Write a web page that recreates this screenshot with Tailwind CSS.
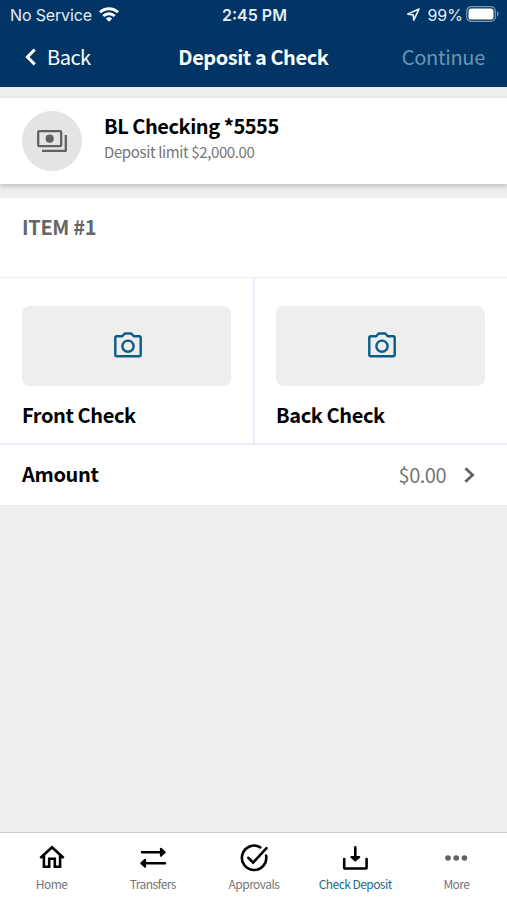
<!DOCTYPE html>
<html lang="en">
<head>
    <meta charset="UTF-8">
    <meta name="viewport" content="width=device-width, initial-scale=1.0">
    <title>Deposit a Check</title>
    <script src="https://cdn.jsdelivr.net/npm/@tailwindcss/browser@4"></script>
</head>
<body class="bg-[#eeeeee] font-['Noto_Sans_CJK_SC',sans-serif] text-black">
    <div class="flex h-[900px] w-[507px] flex-col overflow-hidden">

        <!-- Header -->
        <header class="h-[87px] shrink-0 bg-[#003566] text-white">
            <div class="grid h-[30px] grid-cols-3 items-center pr-[8px] pl-[10px] font-['Inter',sans-serif] text-[16px] leading-[30px] text-[#e4ecf4]">
                <div class="flex items-center gap-[7px]">
                    <span class="tracking-[-0.15px] whitespace-nowrap">No Service</span>
                    <svg class="-mt-0.5 h-[15px] w-5 shrink-0" viewBox="0 0 20 15" fill="none" stroke="#fff" stroke-width="2.9">
                        <path d="M1 5.3a13 13 0 0 1 18 0"/>
                        <path d="M4.3 9a8.3 8.3 0 0 1 11.4 0"/>
                        <path d="M10 14.8 6.8 11.6a4.6 4.6 0 0 1 6.4 0z" fill="#fff" stroke="none"/>
                    </svg>
                </div>
                <div class="text-center font-semibold">2:45 PM</div>
                <div class="flex items-center justify-end">
                    <svg class="mr-[7px] -mt-px h-[13px] w-[13px]" viewBox="0 0 13 13" fill="none" stroke="currentColor" stroke-width="1.7" stroke-linejoin="round">
                        <path d="M12 1 .9 6.1l5.3.7.6 5.3z"/>
                    </svg>
                    <span>99%</span>
                    <svg class="-mt-0.5 ml-[3px] h-4 w-[33px]" viewBox="0 0 33 16">
                        <rect x=".7" y=".7" width="28.6" height="14.6" rx="4.3" fill="none" stroke="#7d9bb7" stroke-width="1.2"/>
                        <rect x="2.5" y="2.5" width="25" height="11" rx="2.6" fill="#fff"/>
                        <path d="M31 5.3c2 .8 2 4.6 0 5.4z" fill="#7d9bb7"/>
                    </svg>
                </div>
            </div>
            <div class="grid h-[53px] grid-cols-3 items-center pr-[22px] pl-[25px] text-[20px] leading-[30px]">
                <button class="flex items-center gap-[11px]">
                    <svg class="mt-px h-[18px] w-[11px]" viewBox="0 0 11 18" fill="none" stroke="currentColor" stroke-width="3">
                        <path d="M9.7 1.6 2.4 9l7.3 7.4"/>
                    </svg>
                    <span class="tracking-[-0.5px]">Back</span>
                </button>
                <h1 class="pr-[4px] text-center font-bold tracking-[-0.44px] whitespace-nowrap">Deposit a Check</h1>
                <button class="text-right tracking-[-0.3px] text-[#6f93b4]">Continue</button>
            </div>
        </header>

        <!-- Account -->
        <section class="mt-[11px] flex h-[86px] shrink-0 items-center bg-white pl-[22px] shadow-[0_2px_5px_rgba(0,0,0,0.22)]">
            <div class="flex size-[60px] items-center justify-center rounded-full bg-[#e4e4e4]">
                <svg class="h-[22px] w-[30px]" viewBox="0 0 30 22" fill="none" stroke="#616161" stroke-width="2.3" stroke-linejoin="round">
                    <rect x="1.2" y="1.2" width="23" height="15" rx="1.2"/>
                    <circle cx="12.7" cy="8.7" r="4.1" fill="#616161" stroke="none"/>
                    <path d="M28.8 5v15.8H5"/>
                </svg>
            </div>
            <div class="-mt-[6px] ml-[22px]">
                <div class="text-[20px] leading-[27px] font-bold tracking-[-0.46px]">BL Checking *5555</div>
                <div class="text-[15px] leading-[25px] tracking-[-0.38px] text-[#757575]">Deposit limit $2,000.00</div>
            </div>
        </section>

        <!-- Check item -->
        <section class="mt-[14px] shrink-0 bg-white">
            <h2 class="h-[80px] border-b border-[#ededf5] pt-[14px] pl-[22px] text-[20px] leading-[30px] font-bold tracking-[-0.35px] text-[#666666]">ITEM #1</h2>
            <div class="grid h-[167px] grid-cols-[255px_252px] border-b-2 border-[#ebebfa]">
                <div class="border-r-2 border-[#ebebfa] px-[22px] pt-[28px]">
                    <button class="flex h-20 w-full items-center justify-center rounded-lg bg-[#eeeeee] pb-[3px] pl-[2px]">
                        <svg class="h-[26px] w-7" viewBox="0 0 28 26" fill="none" stroke="#0b5c85" stroke-width="2.4" stroke-linejoin="round">
                            <path d="M2.5 4.3h5.7L10.7 1.5h6.6l2.5 2.8h5.7a1.2 1.2 0 0 1 1.2 1.2v17.6a1.2 1.2 0 0 1-1.2 1.2h-23a1.2 1.2 0 0 1-1.2-1.2V5.5a1.2 1.2 0 0 1 1.2-1.2z"/>
                            <circle cx="14" cy="14.2" r="5.6"/>
                        </svg>
                    </button>
                    <div class="mt-[14px] text-[20px] leading-[30px] font-bold tracking-[-0.4px]">Front Check</div>
                </div>
                <div class="pt-[28px] pr-[22px] pl-[21px]">
                    <button class="flex h-20 w-full items-center justify-center rounded-lg bg-[#eeeeee] pb-[3px] pl-[2px]">
                        <svg class="h-[26px] w-7" viewBox="0 0 28 26" fill="none" stroke="#0b5c85" stroke-width="2.4" stroke-linejoin="round">
                            <path d="M2.5 4.3h5.7L10.7 1.5h6.6l2.5 2.8h5.7a1.2 1.2 0 0 1 1.2 1.2v17.6a1.2 1.2 0 0 1-1.2 1.2h-23a1.2 1.2 0 0 1-1.2-1.2V5.5a1.2 1.2 0 0 1 1.2-1.2z"/>
                            <circle cx="14" cy="14.2" r="5.6"/>
                        </svg>
                    </button>
                    <div class="mt-[14px] text-[20px] leading-[30px] font-bold tracking-[-0.4px]">Back Check</div>
                </div>
            </div>
            <div class="flex h-[60px] items-center pr-[32px] pl-[22px] text-[20px] leading-[30px]">
                <span class="-mt-[2px] grow font-bold tracking-[-0.35px]">Amount</span>
                <span class="-mt-px tracking-[-0.5px] text-[#757575]">$0.00</span>
                <svg class="ml-[18px] h-4 w-[11px]" viewBox="0 0 11 16" fill="none" stroke="#616161" stroke-width="2.8">
                    <path d="M1.4 1.2 8.6 8l-7.2 6.8"/>
                </svg>
            </div>
        </section>

        <!-- Tab bar -->
        <nav class="mt-auto grid h-[68px] shrink-0 grid-cols-5 border-t border-[#cfcfcf] bg-white pt-[10px] pl-px text-center text-[12px] leading-[18px] tracking-[-0.55px] text-[#757575]">
            <a class="flex flex-col items-center gap-[2px]">
                <svg class="h-[30px] w-7" viewBox="0 0 28 30" fill="none" stroke="#000" stroke-width="2.6">
                    <path d="M2.3 15 14 4.3 25.7 15M5.9 12.2v11.6h5.3v-8h5.6v8h5.3V12.2"/>
                </svg>
                Home
            </a>
            <a class="flex flex-col items-center gap-[2px]">
                <svg class="h-[30px] w-7" viewBox="0 0 28 30" fill="none" stroke="#000" stroke-width="2.5" stroke-linecap="round" stroke-linejoin="round">
                    <path d="M3 9.3h21M5 20.2h21"/>
                    <path d="M21.9 5.8 25.7 9.3l-3.8 3.5zM6.1 16.7l-3.8 3.5 3.8 3.5z" fill="#000" stroke-width="2"/>
                </svg>
                Transfers
            </a>
            <a class="flex flex-col items-center gap-[2px]">
                <svg class="h-[30px] w-7" viewBox="0 0 28 30" fill="none" stroke="#000" stroke-width="2.6" stroke-linecap="round">
                    <path d="M20.3 4.3A12.2 12.2 0 1 0 26.1 12.6"/>
                    <path d="m8.4 14.8 4.7 4.8L26.5 5.2"/>
                </svg>
                Approvals
            </a>
            <a class="flex flex-col items-center gap-[2px] whitespace-nowrap text-[#1f6a8c]">
                <svg class="h-[30px] w-7" viewBox="0 0 28 30" fill="none" stroke="#000" stroke-width="2.6" stroke-linecap="round" stroke-linejoin="round">
                    <path d="M3.2 16v8.2a1.3 1.3 0 0 0 1.3 1.3h19.8a1.3 1.3 0 0 0 1.3-1.3V16M14.3 4.2V16"/>
                    <path d="M10.4 13.9h7.8l-3.9 3.6z" fill="#000" stroke-width="2"/>
                </svg>
                Check Deposit
            </a>
            <a class="flex flex-col items-center gap-[2px]">
                <svg class="h-[30px] w-7" viewBox="0 0 28 30" fill="#616161">
                    <circle cx="6" cy="15" r="2.8"/>
                    <circle cx="14.2" cy="15" r="2.8"/>
                    <circle cx="22.4" cy="15" r="2.8"/>
                </svg>
                More
            </a>
        </nav>
    </div>
</body>
</html>
